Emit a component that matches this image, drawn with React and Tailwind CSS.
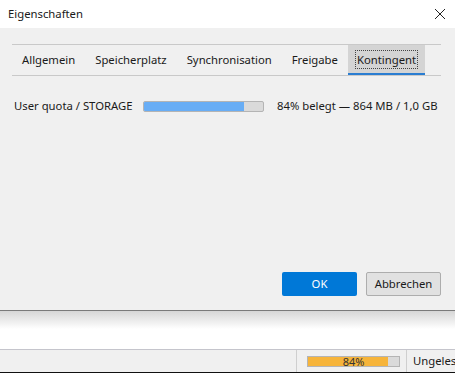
import React from "react";

const tabs = ["Allgemein", "Speicherplatz", "Synchronisation", "Freigabe", "Kontingent"];

const App = () => {
    const active = "Kontingent";

    return (
        <div className="w-[455px] h-[373px] overflow-hidden bg-white flex flex-col text-[11.3px] text-[#1a1a1a] font-['Noto_Sans',sans-serif] whitespace-nowrap">
            {/* dialog */}
            <div className="h-[311px] flex flex-col border-b border-[#7a7a7a]">
                <div className="h-[28px] bg-white flex items-center justify-between pl-[8px] pr-[9px]">
                    <span className="leading-none">Eigenschaften</span>
                    <svg width="12" height="12" viewBox="0 0 12 12" className="text-[#222]">
                        <path d="M1 1 L11 11 M11 1 L1 11" stroke="currentColor" strokeWidth="1" />
                    </svg>
                </div>
                <div className="flex-1 bg-[#f0f0f0] px-[12px] pt-[16px] flex flex-col">
                    <div className="w-[429px] h-[32px] border-t border-b border-[#c9c9c9] flex items-stretch">
                        {tabs.map(tab => (
                            <div
                                key={tab}
                                className={`flex items-center ${tab === active ? "px-[8px] bg-[#d4d4d4] border-b-2 border-[#2a7dd1]" : "px-[10px] mb-[2px]"}`}
                            >
                                <span className={`leading-[17px] ${tab === active ? "outline outline-1 outline-dotted outline-[#444] px-[1px]" : ""}`}>
                                    {tab}
                                </span>
                            </div>
                        ))}
                    </div>

                    <div className="flex items-center mt-[22px] pl-[2px]">
                        <span className="w-[129px] flex-none">User quota / STORAGE</span>
                        <div className="w-[121px] flex-none h-[11px] rounded-[2px] border border-[#b4b4b4] bg-[#dadada] overflow-hidden">
                            <div className="h-full bg-[#68adf5]" style={{ width: "84%" }} />
                        </div>
                        <span className="ml-[13px] flex-none">84% belegt — 864 MB / 1,0 GB</span>
                    </div>

                    <div className="flex-1" />
                    <div className="flex justify-end gap-[9px] pr-[2px] mb-[14px]">
                        <button className="w-[75px] h-[24px] rounded-[2px] bg-[#0078d7] text-white">OK</button>
                        <button className="w-[75px] h-[24px] rounded-[2px] bg-[#e1e1e1] border border-[#adadad]">Abbrechen</button>
                    </div>
                </div>
            </div>

            {/* area behind dialog */}
            <div className="h-[38px] bg-white">
                <div className="h-[18px] bg-gradient-to-b from-[#d6d6d6] to-white" />
            </div>

            {/* status bar */}
            <div className="flex-1 bg-[#f0f0f0] border-t border-[#c5c5cc] border-b border-b-[#111] flex items-center">
                <div className="flex-1" />
                <div className="h-full border-l border-[#cfcfcf] pl-[10px] pr-[6px] flex items-center">
                    <div className="relative w-[93px] h-[11px] border border-[#b4b4b4] bg-[#dadada]">
                        <div className="h-full bg-[#f6b43a]" style={{ width: "88%" }} />
                        <span className="absolute inset-0 flex items-center justify-center text-[11px] leading-none text-[#333]">84%</span>
                    </div>
                </div>
                <div className="h-full border-l border-[#cfcfcf] pl-[6px] flex items-center w-[49px] overflow-hidden">
                    Ungelesen
                </div>
            </div>
        </div>
    );
};

export default App;
